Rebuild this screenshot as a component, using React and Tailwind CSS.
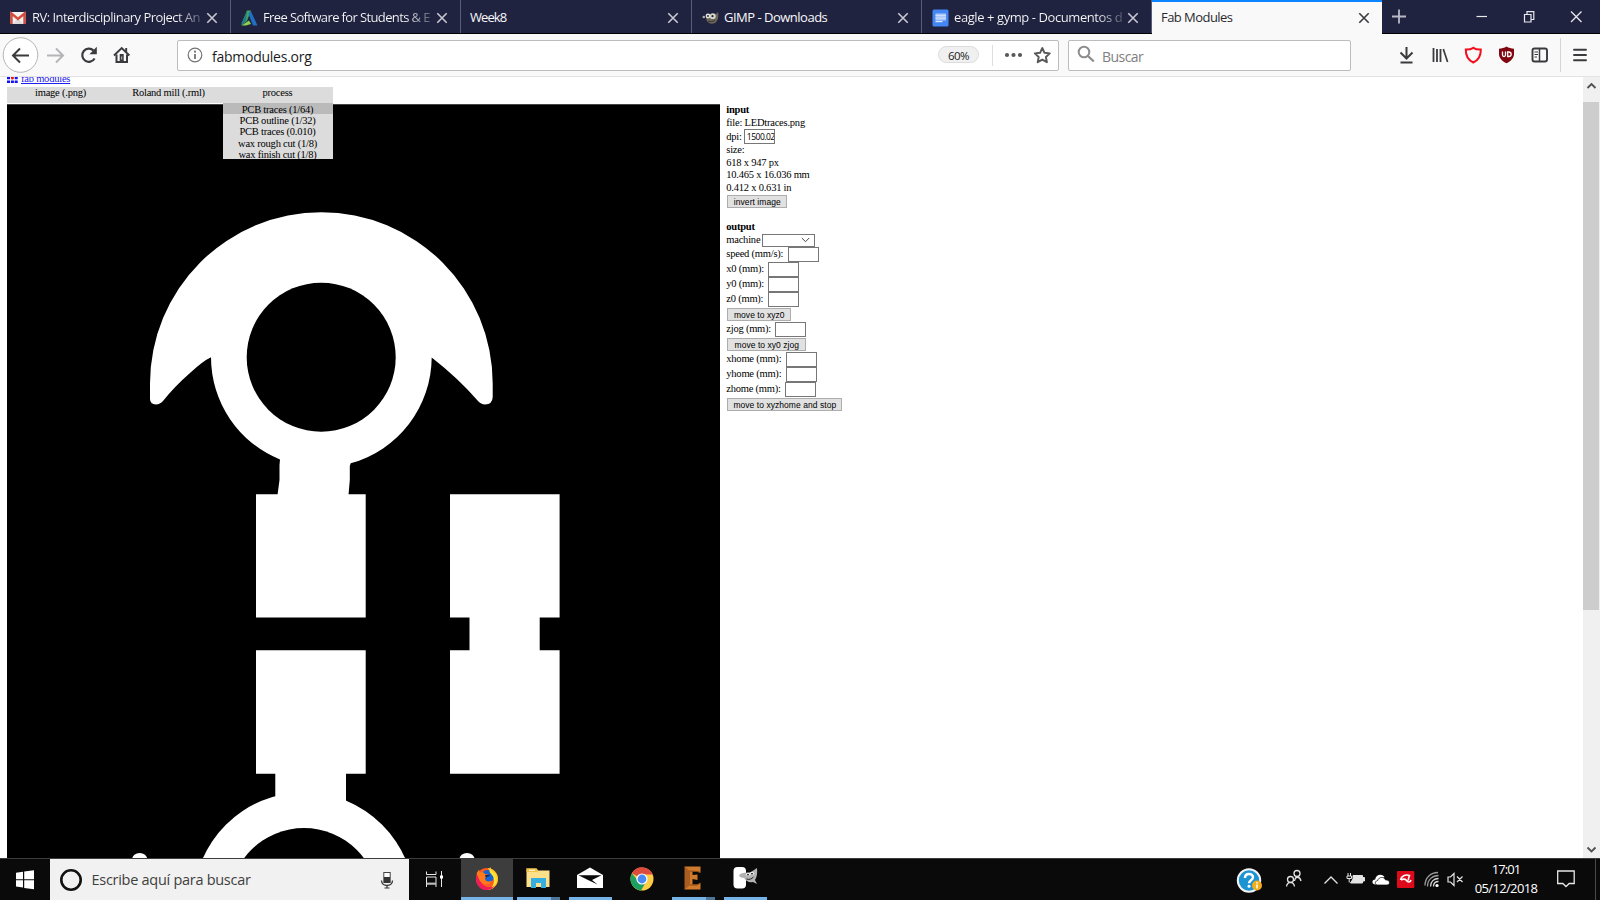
import React from 'react';

const ui = "font-['Open_Sans','Noto_Sans',sans-serif]";
const serif = "font-['Liberation_Serif',serif]";

function Svg({ w, h, className = '', children, ...rest }) {
  return (
    <svg width={w} height={h} viewBox={`0 0 ${w} ${h}`} fill="none" className={`block shrink-0 ${className}`} {...rest}>
      {children}
    </svg>
  );
}

const Close = ({ className = '', color = '#c8c8d2' }) => (
  <Svg w={12} h={12} className={className}>
    <path d="M1.3 1.3l9.4 9.4M10.7 1.3L1.3 10.7" stroke={color} strokeWidth="1.6" />
  </Svg>
);

const GmailIcon = () => (
  <Svg w={16} h={14}>
    <rect x=".5" y="1" width="15" height="12" rx="1" fill="#f2f2f2" />
    <path d="M3 13L8 7l5 6z" fill="#dcdcdc" />
    <path d="M1.5 13V2.5L8 8l6.500-5.500V13" stroke="#d54b3d" strokeWidth="2.4" />
  </Svg>
);

const AutodeskIcon = () => (
  <Svg w={17} h={16}>
    <path d="M6 .5h4L6 11l-5.500 4z" fill="#3fa45b" />
    <path d="M6 .5L.5 13V15.500L5 11z" fill="#1f7f86" />
    <path d="M9.500.5L16.500 15.500H12L7.500 4z" fill="#1f6fc4" />
    <path d="M.5 15.500L8 10.500l2 3.500-5 1.500z" fill="#8bd14f" />
  </Svg>
);

const WilberIcon = () => (
  <Svg w={17} h={14}>
    <path d="M4 6c3-4 8-3 10-3l2-2c.8 3 .3 9-3 11-3 1.500-7 .8-8.500-3z" fill="#6b655a" />
    <circle cx="1.800" cy="6" r="1.300" fill="#b5b0a8" />
    <circle cx="6" cy="5" r="2.400" fill="#e4e4e0" />
    <circle cx="10.800" cy="5.200" r="2.900" fill="#d8d8d2" />
    <circle cx="6" cy="5" r=".9" fill="#222" />
    <circle cx="10.500" cy="5.200" r="1.100" fill="#222" />
    <path d="M6 10c3 1 5 1 7-1" stroke="#3c3831" />
  </Svg>
);

const DocsIcon = () => (
  <Svg w={17} h={18}>
    <rect x=".5" y=".5" width="16" height="17" rx="1.500" fill="#4486f4" />
    <rect x="3.500" y="4.500" width="10.500" height="7" fill="#a9c7fa" />
    <path d="M3.500 12.500h7" stroke="#dce8fd" strokeWidth="1.400" />
    <path d="M3.500 6.500h10.500M3.500 9.200h10.500" stroke="#d9e6fd" strokeWidth=".8" />
  </Svg>
);

function Tab({ icon, title, textClass, fade }) {
  return (
    <div className="flex h-full shrink-0 items-center border-r border-[#5a5b78] pt-[2px] pl-[9px] pr-[12px]">
      {icon && <div className="mr-[5px] ml-px w-[17px] shrink-0">{icon}</div>}
      <div className={`min-w-0 flex-1 whitespace-nowrap text-[#f9f9fa] ${textClass}`}>
        {fade ? (
          <span className="-mr-[4px] block bg-[linear-gradient(90deg,#f9f9fa_84%,#202340_103%)] bg-clip-text text-transparent">{title}</span>
        ) : title}
      </div>
      <Close className="ml-[6px]" />
    </div>
  );
}

function TabBar() {
  return (
    <div className="flex h-[34px] shrink-0 border-b border-black bg-[#202340] text-[13px]">
      <div className="w-[231px] shrink-0 [&>div]:w-full"><Tab icon={<GmailIcon />} title="RV: Interdisciplinary Project An" textClass="tracking-[-0.54px]" fade /></div>
      <div className="w-[230px] shrink-0"><Tab icon={<AutodeskIcon />} title="Free Software for Students & E" textClass="tracking-[-0.62px]" fade /></div>
      <div className="w-[231px] shrink-0"><Tab title="Week8" textClass="tracking-[-0.95px]" /></div>
      <div className="w-[230px] shrink-0"><Tab icon={<WilberIcon />} title="GIMP - Downloads" textClass="tracking-[-0.5px]" /></div>
      <div className="w-[230px] shrink-0"><Tab icon={<DocsIcon />} title="eagle + gymp - Documentos d" textClass="tracking-[-0.42px]" fade /></div>
      <div className="-mb-px flex h-[34px] w-[230px] shrink-0 items-center border-t-2 border-[#0a84ff] bg-[#f9f9fa] pr-[12px] pl-[9px]">
        <div className="flex-1 tracking-[-0.55px] text-[#2a2a2e]">Fab Modules</div>
        <Close color="#3a3a3e" />
      </div>
      <Svg w={218} h={33}>
        <path d="M10 16.500h14M17 9.500v14" stroke="#b9bac8" strokeWidth="1.800" />
        <path d="M94.500 16.500h10.500" stroke="#e8e8ec" strokeWidth="1.200" />
        <path d="M142.500 14.500h6.500v7.500h-6.500zM145 14.300v-2.600h6.800v7.800h-2.600" stroke="#e8e8ec" strokeWidth="1.200" />
        <path d="M189 11.500l10.500 10.500M199.500 11.500L189 22" stroke="#e8e8ec" strokeWidth="1.300" />
      </Svg>
    </div>
  );
}

function Toolbar() {
  return (
    <div className="flex h-[43px] shrink-0 items-center border-b border-[#e3e3e5] bg-[#f9f9fa]">
      <Svg w={177} h={42}>
        <circle cx="20.500" cy="21" r="17.300" fill="#fff" stroke="#b5b5b6" />
        <path d="M29 21.500H13.500M20 14.500l-7 7 7 7" stroke="#3b3b3e" strokeWidth="2" />
        <path d="M47 21.500h15.500M56 14.500l7 7-7 7" stroke="#b5b5b7" strokeWidth="2" />
        <path d="M94.600 24.500A6.600 6.600 0 1 1 93.500 16.500" stroke="#3b3b3e" strokeWidth="2.200" />
        <path d="M96.800 12.800v7.400h-7.400z" fill="#3b3b3e" />
        <path d="M114 21.500l7.700-7.500 7.700 7.500M126.200 14v4" stroke="#3b3b3e" strokeWidth="1.900" />
        <path d="M116.500 20.500v7.500h10.500v-7.500" stroke="#3b3b3e" strokeWidth="2" />
        <path d="M119.700 20h4v8h-4z" fill="#3b3b3e" />
        <path d="M121.700 22.500v3" stroke="#bbb" />
      </Svg>
      <div className="flex h-[31px] w-[882px] items-center rounded-[2px] border border-[#bcbcbc] bg-white">
        <Svg w={16} h={16} className="ml-[9px] -mt-px">
          <circle cx="8" cy="8" r="6.800" stroke="#737373" strokeWidth="1.200" />
          <path d="M8 7v5" stroke="#737373" strokeWidth="1.800" />
          <circle cx="8" cy="4.700" r="1.100" fill="#737373" />
        </Svg>
        <div className="ml-[9px] flex-1 pt-[3px] text-[14px] leading-[20px] tracking-[-0.25px] text-[#1c1c1e]">fabmodules.org</div>
        <div className="-mt-px flex h-[17px] w-[41px] items-center justify-center rounded-full border border-[#dcdcdc] bg-[#f0f0f0] pt-[2px] text-[11.5px] leading-none tracking-[-0.5px] text-[#222]">60%</div>
        <Svg w={79} h={29}>
          <path d="M13.500 4v21" stroke="#dedede" />
          <g fill="#58585b"><circle cx="28" cy="14" r="2.100" /><circle cx="34.500" cy="14" r="2.100" /><circle cx="41" cy="14" r="2.100" /></g>
          <path d="M63.300 7l2.200 4.800 5.300.6-3.900 3.600 1 5.200-4.600-2.600-4.600 2.600 1-5.200-3.900-3.600 5.300-.6z" stroke="#58585b" strokeWidth="1.900" strokeLinejoin="round" />
        </Svg>
      </div>
      <div className="ml-[9px] flex h-[31px] w-[283px] items-center rounded-[2px] border border-[#bcbcbc] bg-white">
        <Svg w={18} h={18} className="-mt-[2px] ml-[8px]">
          <circle cx="7" cy="7" r="5.300" stroke="#8d8d8d" strokeWidth="2" />
          <path d="M11 11l5.800 5.500" stroke="#8d8d8d" strokeWidth="2.300" />
        </Svg>
        <div className="ml-[7px] pt-[3px] text-[14px] leading-[20px] tracking-[-0.55px] text-[#808080]">Buscar</div>
      </div>
      <Svg w={249} h={42}>
        <path d="M55.500 13v11.500M49.500 18.500l6 6 6-6M49.500 28.500h12" stroke="#3b3b3e" strokeWidth="2" />
        <path d="M82.500 14v14" stroke="#3b3b3e" strokeWidth="1.800" />
        <path d="M86 15v13M89.500 15v13" stroke="#3b3b3e" strokeWidth="1.800" />
        <path d="M92.300 15l4.300 13" stroke="#3b3b3e" strokeWidth="1.700" />
        <path d="M122.300 13.800c2.500 1.600 5 1.800 7.500 1.700.2 6-2.300 10.500-7.500 13-5.200-2.500-7.700-7-7.500-13 2.500.1 5-.1 7.500-1.700z" stroke="#f2101c" strokeWidth="2" />
        <path d="M155.500 12.500c2.300 1.400 4.700 2 7.500 2.200v5.300c0 4-3 7-7.500 9.300-4.500-2.300-7.500-5.300-7.500-9.300v-5.300c2.800-.2 5.200-.8 7.500-2.200z" fill="#800610" />
        <path d="M151.500 17.500v3.500c0 2 3 2 3 0v-3.500M156.700 18v4.500h1c3.300 0 3.300-4.500 0-4.500z" stroke="#fff" strokeWidth="1.300" />
        <rect x="181.500" y="14.500" width="14.500" height="13" rx="2" stroke="#3b3b3e" strokeWidth="1.900" />
        <path d="M188.500 14.500v13" stroke="#3b3b3e" strokeWidth="1.500" />
        <path d="M183.500 18h3.500M183.500 20.500h3.500M183.500 23h2.500" stroke="#3b3b3e" />
        <path d="M209.500 4v34" stroke="#d4d4d6" />
        <path d="M223 15.800h12M223 21h12M223 26.200h12" stroke="#3b3b3e" strokeWidth="1.900" strokeLinecap="round" />
      </Svg>
    </div>
  );
}

const processes = ['PCB traces (1/64)', 'PCB outline (1/32)', 'PCB traces (0.010)', 'wax rough cut (1/8)', 'wax finish cut (1/8)'];

function Menu() {
  return (
    <div className="relative flex h-[16px] w-[326px] bg-[#dcdcdc] text-center leading-[12px]">
      <div className="w-[107px]">image (.png)</div>
      <div className="w-[109px]">Roland mill (.rml)</div>
      <div className="w-[109px]">process</div>
      <div className="absolute top-[16px] left-[216px] flex h-[56px] w-[110px] flex-col bg-[#dcdcdc] pr-px leading-[13.200px]">
        {processes.map((p, i) => (
          <div key={p} className={i === 0 ? '-mr-px h-[11.3px] bg-[#bababa] pr-px' : 'h-[11.2px]'}>{p}</div>
        ))}
      </div>
    </div>
  );
}

function Traces() {
  return (
    <svg width="713" height="754" viewBox="7 104 713 754" className="block shrink-0 bg-black">
      <path d="M7 104.500h713" stroke="#444" />
      <g fill="#fff">
        <path d="M150 383.600A171.350 171.350 0 0 1 492.700 383.600V397Q492.500 404.400 485 404.400Q481 404.400 478 401Q458 378 431.700 357.500A110.400 110.400 0 0 1 350.700 463.300L349.800 466V480L348.500 495H277.500L279.500 480V465L280 459.500A110.400 110.400 0 0 1 211 357.300Q203 361 190 373Q175 386 163 401Q160 404.400 156 404.400Q150 404.400 150 399z" />
        <path d="M256 494.300h109.700v123.300H256zM256 650.300h109.700v123.400H346V820H275.300V773.700H256z" />
        <path d="M450 494.300h109.600v123.300H539.700v32.700h19.900v123.400H450V650.300h19.500v-32.700H450z" />
        <circle cx="304" cy="902.800" r="110.500" />
        <ellipse cx="139.700" cy="859.300" rx="7.500" ry="6.300" />
        <ellipse cx="467" cy="859.300" rx="7.500" ry="6.300" />
      </g>
      <circle cx="321.200" cy="357.200" r="74.500" />
      <circle cx="304" cy="902.500" r="74.500" />
    </svg>
  );
}

const Field = ({ label, w, value }) => (
  <div className="flex h-[15px] items-center">
    <span className={w}>{label}</span>
    <span className="flex h-[15px] w-[31px] items-center overflow-hidden border border-[#777] bg-white pt-px pl-[2px] font-['Open_Sans',sans-serif] text-[8.5px] tracking-[-0.5px]">{value}</span>
  </div>
);

const Btn = ({ w, children }) => (
  <div className="flex h-[15px] items-center">
    <span className={`ml-[1px] flex h-[13px] items-center justify-center border border-[#adadad] bg-[#e1e1e1] pt-px font-['Liberation_Sans',sans-serif] text-[8.5px] leading-none tracking-[0.05px] ${w}`}>{children}</span>
  </div>
);

function Controls() {
  return (
    <div className="ml-[6.300px] flex w-[160px] flex-col pt-[0.300px] whitespace-nowrap leading-[12.500px]">
      <b>input</b>
      <div>file: LEDtraces.png</div>
      <Field label="dpi:" w="w-[17.500px]" value="1500.02" />
      <div>size:</div>
      <div>618 x 947 px</div>
      <div>10.465 x 16.036 mm</div>
      <div>0.412 x 0.631 in</div>
      <Btn w="w-[60px]">invert image</Btn>
      <b className="mt-[12px]">output</b>
      <div className="flex h-[13px] items-center">
        <span className="w-[36px]">machine</span>
        <span className="flex h-[13px] w-[53px] items-center justify-end border border-[#777] bg-white pr-[4px]">
          <Svg w={9} h={6}><path d="M.8 1l3.700 3.700L8.200 1" stroke="#444" /></Svg>
        </span>
      </div>
      <Field label="speed (mm/s):" w="w-[61.500px]" />
      <Field label="x0 (mm):" w="w-[42px]" />
      <Field label="y0 (mm):" w="w-[42px]" />
      <Field label="z0 (mm):" w="w-[41.500px]" />
      <Btn w="w-[64px]">move to xyz0</Btn>
      <Field label="zjog (mm):" w="w-[49px]" />
      <Btn w="w-[79px]">move to xy0 zjog</Btn>
      <Field label="xhome (mm):" w="w-[59.500px]" />
      <Field label="yhome (mm):" w="w-[59.500px]" />
      <Field label="zhome (mm):" w="w-[58.500px]" />
      <Btn w="w-[115px]">move to xyzhome and stop</Btn>
    </div>
  );
}

function Page() {
  return (
    <div className="flex min-h-0 flex-1 overflow-hidden bg-white">
      <div className={`flex flex-1 flex-col overflow-hidden pl-[7px] text-[10.5px] tracking-[-0.22px] text-black ${serif}`}>
        <div className="flex h-[10px] shrink-0 items-start">
          <Svg w={11} h={6}>
            <path d="M0 0h3v2.300H0zM7.700 0h3v2.300h-3zM0 3.500h3v2.500H0zM3.900 3.500h3v2.500h-3zM7.700 3.500h3v2.500h-3z" fill="#1010f0" />
            <circle cx="5.400" cy=".9" r="1.500" fill="#f01010" />
          </Svg>
          <a className="-mt-[4px] ml-[3px] leading-[12px] text-[#2020ee] underline">fab modules</a>
        </div>
        <div className="h-[17px] shrink-0"><Menu /></div>
        <div className="flex shrink-0 items-start">
          <Traces />
          <Controls />
        </div>
      </div>
      <div className="flex w-[17px] shrink-0 flex-col bg-[#f0f0f0]">
        <Svg w={17} h={25}><path d="M4.500 11l4-4 4 4" stroke="#505050" strokeWidth="1.800" /></Svg>
        <div className="mr-px h-[508px] bg-[#cdcdcd]" />
        <div className="flex-1" />
        <Svg w={17} h={18}><path d="M4.500 7.500l4 4 4-4" stroke="#505050" strokeWidth="1.800" /></Svg>
      </div>
    </div>
  );
}

function Task({ w, active, bar, children }) {
  return (
    <div className={`flex h-full shrink-0 flex-col justify-between ${w} ${active ? 'bg-[#3d3d3d]' : ''}`}>
      <div className="flex flex-1 items-center justify-center">{children}</div>
      <div className="flex h-[3px]">{bar}</div>
    </div>
  );
}

const Bar = ({ split }) => (
  <>
    <div className="h-full flex-1 bg-[#76b3e8]" />
    {split && <div className="h-full w-[9px] bg-[#4f7699]" />}
  </>
);

function Taskbar() {
  return (
    <div className="flex h-[42px] shrink-0 border-t border-[#3c3c3c] bg-[#0a0a0a]">
      <Svg w={50} h={41}>
        <path d="M16 13.800l7-1v7.400h-7zM24.200 12.600L34 11.200v9h-9.800zM16 21.300h7v7.300l-7-1zM24.200 21.300H34v9l-9.800-1.400z" fill="#fff" />
      </Svg>
      <div className="flex w-[358.500px] shrink-0 items-center bg-[#f1f1f1]">
        <Svg w={24} h={24} className="ml-[8.500px]"><circle cx="12" cy="12" r="9.700" stroke="#111" strokeWidth="2.600" /></Svg>
        <div className="ml-[9px] flex-1 pt-px text-[14.500px] leading-[20px] tracking-[-0.28px] text-[#404040]">Escribe aquí para buscar</div>
        <Svg w={14} h={18} className="mr-[14.500px]">
          <rect x="3.800" y="1.500" width="6.400" height="10" stroke="#444" strokeWidth="1" fill="#fff" />
          <path d="M4 6h6v6H4z" fill="#333" />
          <path d="M1.500 9.500c0 6.500 11 6.500 11 0" stroke="#333" strokeWidth="1.300" />
          <path d="M4.500 17h5M7 14.500v2.500" stroke="#333" strokeWidth="1.200" />
        </Svg>
      </div>
      <Svg w={53} h={41} className="-mr-[0.500px]">
        <path d="M17.500 12.500v3h9.500v-3M17.500 18h9.500v7h-9.500zM17.500 28v-3M27 28v-3" stroke="#e8e8e8" />
        <path d="M17.500 24.500h9.500" stroke="#bbb" strokeWidth="1.800" />
        <path d="M32.500 12v16" stroke="#e8e8e8" />
        <path d="M31 16.500h3v3h-3z" fill="#fff" />
      </Svg>
      <Task w="w-[52px]" active bar={<Bar />}>
        <Svg w={24} h={25} className="mt-[1px] -ml-px">
          <circle cx="12" cy="13" r="11" fill="#ff5a22" />
          <path d="M13 2c7 1 11 7 9.800 13C21.500 21 16 24.500 10.500 24c7-1 10-7 8-12-1-3-4-5-5.500-10z" fill="#ffc928" />
          <path d="M1.500 8C0 15 2 21 8 23.500c5 1.500 9 0 12-4-6 3-12 2-14-4z" fill="#ee1c58" />
          <circle cx="12.500" cy="10.500" r="6.500" fill="#1464d8" />
          <path d="M1.500 7.500L4 3.500l1 3c2-1 4 0 5 1.500l4 .5c.5 2-3 2-4 4 0 3 4 4 7 2-2 5-9 5-12 .5-2-3-2-6-3.500-7.500z" fill="#ff7a18" />
          <path d="M15 .8l1.500 4 4 3.500c3 5 1 11-4 13.500 3-4 3-8 1.500-11.500L14.500 6z" fill="#ffe233" />
          <path d="M10 9l5-.5c0 2-3 2-4 3.500z" fill="#132a6a" />
        </Svg>
      </Task>
      <Task w="ml-[4px] w-[43px]" bar={<Bar split />}>
        <Svg w={24} h={22} className="-ml-[1px]">
          <path d="M.5 1.500h10l1.500 2h11.500V20H.5z" fill="#ffe08a" />
          <path d="M.5 1.500h10l1.500 2-1 1.500H.5z" fill="#f4c242" />
          <path d="M3 2.800h6v1H3z" fill="#fff" />
          <path d="M5 21v-10h15v10h-5v-5h-5v5z" fill="#35aee2" />
        </Svg>
      </Task>
      <Task w="ml-[9px] w-[43px]" bar={<Bar />}>
        <Svg w={26} h={22} className="-ml-[1px]">
          <path d="M0 8L13 .5 26 8v13H0z" fill="#fff" />
          <path d="M1.500 8.300h23L15 13l5.500 4.500L11 13z" fill="#0a0a0a" />
        </Svg>
      </Task>
      <Task w="ml-[8px] w-[43px]">
        <Svg w={24} h={24} className="mt-[1px]">
          <circle cx="12" cy="12" r="11.500" fill="#fdcd45" />
          <path d="M12 12L2 6.300A11.500 11.500 0 0 1 22.700 7.500H12z" fill="#dd4b3e" />
          <path d="M2 6.300A11.500 11.500 0 0 0 11 23.500L16 15l-8-1z" fill="#1da160" />
          <circle cx="12" cy="12" r="5.600" fill="#fff" />
          <circle cx="12" cy="12" r="4.400" fill="#4a8af4" />
        </Svg>
      </Task>
      <Task w="ml-[9px] w-[43px]" bar={<Bar split />}>
        <Svg w={17} h={24} className="ml-[-2px]">
          <path d="M.5.5h16v6L13 5.500H8.500V9l5-.5V14l-5-1v5.500H13l3.500-1.500v6.500H.5l2-4v-15z" fill="#cf7a2c" />
          <path d="M.5.5L6 5v14L.5 23.500z" fill="#a85c20" />
          <path d="M6 5l7 .500 3.500 1M6 19h7l3.500-2" stroke="#8f4a15" />
        </Svg>
      </Task>
      <Task w="ml-[9px] w-[43px]" bar={<Bar />}>
        <Svg w={25} h={24}>
          <rect x=".5" y="1" width="12.500" height="21.500" rx="4" fill="#fff" />
          <path d="M7 8c4-2 9-1 11-2l6-4c.5 5 0 9-2 12l2 4-4-2c-4 1-7-1-9-4-2 0-4-1-5-2z" fill="#b3b3b3" />
          <circle cx="15" cy="8.500" r="1.800" fill="#fff" /><circle cx="19" cy="7.500" r="1.800" fill="#fff" />
          <circle cx="15" cy="8.700" r=".9" fill="#111" /><circle cx="19" cy="7.700" r=".9" fill="#111" />
          <path d="M13.500 13c3 1 5 0 7-2" stroke="#222" />
        </Svg>
      </Task>
      <div className="flex-1" />
      <Svg w={272} h={41}>
        <g transform="translate(-4 0)">
          <circle cx="53" cy="21.500" r="11.200" fill="#1d94d2" stroke="#f4f4f4" strokeWidth="2" />
          <path d="M49 19c0-5.500 8-5 8-.7 0 2.800-4 3-4 6" stroke="#fff" strokeWidth="2.400" />
          <circle cx="53" cy="27.300" r="1.500" fill="#fff" />
          <circle cx="61" cy="26.500" r="5" fill="#f3ac1b" />
          <path d="M61 25.500v4M61 23v1.500" stroke="#fff" strokeWidth="1.500" />
          <g stroke="#e4e4e4" strokeWidth="1.300">
            <circle cx="101" cy="14.500" r="3" /><path d="M98.500 22c1-5.500 5.500-4.500 6.500 0" />
            <circle cx="94.500" cy="20.500" r="3" /><path d="M90.500 27.500c1-5.500 7-5.500 8 0" />
            <path d="M128.500 24.500l6.500-6.500 6.500 6.500" />
          </g>
        </g>
        <g transform="translate(-3.500 -1)">
          <path d="M156.500 17.500h9.500v7.500h-12l2.500-4zM166.500 19.500h1.500v3.500h-1.500" fill="#e4e4e4" stroke="#e4e4e4" />
          <path d="M151.500 15v3M154 15v3M150.500 18h4.500v2.500h-4.500zM152.700 20.500v4" stroke="#e4e4e4" />
        </g>
        <g transform="translate(-3.500 -.5)">
          <path d="M179 26c-4 0-4-5-.3-5 .5-5 6.500-6.500 9.300-2.500" fill="#fff" />
          <path d="M181 26.500c-3 0-3-4 .2-4.500 1-4 7-4 7.800-.5 5-.5 5 5 1.500 5z" fill="#fff" stroke="#0a0a0a" strokeWidth=".7" />
        </g>
        <rect x="197" y="12" width="17.300" height="17" rx="1" fill="#dd0a1b" />
        <path d="M200.500 21c.5-4 5-6 9-4.500-.5 1.500-1.500 3-1 5M201 21c2-1.500 4.500-1 5.500.5 1.200 2 4 2 4.500-.5" stroke="#fff" strokeWidth="1.600" />
        <g stroke="#d8d8d8" strokeWidth="1.300">
          <path d="M233.500 27.500c0-3 2-5 5-5M230.500 27.500c0-5 3.500-8 8-8" />
          <path d="M227.500 27.500c0-7 5-11 11-11M225 26.500c0-8 6-13 13-13" stroke="#9a9a9a" />
        </g>
        <circle cx="237" cy="26.500" r="1.600" fill="#fff" />
        <path d="M248 18h2.500l3.500-3.500v12l-3.500-3.500h-2.500zM257 17.500l5.500 5.500M262.500 17.500l-5.500 5.500" stroke="#e4e4e4" strokeWidth="1.200" />
      </Svg>
      <div className="-ml-px mr-px flex w-[70px] shrink-0 flex-col items-center pt-[1px] text-[13px] leading-[19px] text-white">
        <div className="tracking-[-0.9px]">17:01</div>
        <div className="tracking-[-0.65px]">05/12/2018</div>
      </div>
      <Svg w={58} h={41}>
        <path d="M15.700 12h16.500v12.500h-5l-3.200 3-3.200-3h-5.100z" stroke="#e8e8e8" strokeWidth="1.300" />
        <path d="M53.500 0v41" stroke="#4a4a4a" />
      </Svg>
    </div>
  );
}

export default function App() {
  return (
    <div className={`flex h-[900px] w-[1600px] flex-col overflow-hidden bg-white ${ui}`}>
      <TabBar />
      <Toolbar />
      <Page />
      <Taskbar />
    </div>
  );
}
